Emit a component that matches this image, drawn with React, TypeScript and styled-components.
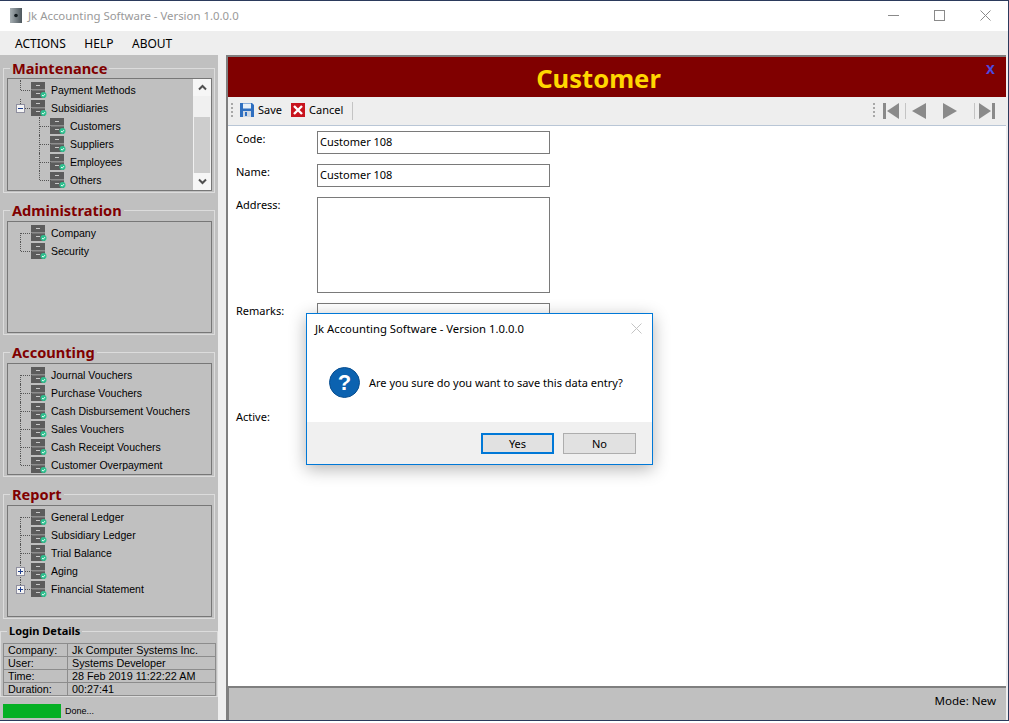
import React from 'react';
import styled, { createGlobalStyle } from 'styled-components';

const GlobalStyle = createGlobalStyle`
  html, body {
    margin: 0;
    padding: 0;
    background: #ffffff;
    overflow: hidden;
  }
  * {
    box-sizing: border-box;
  }
`;

const uiFont = `"Noto Sans", "Open Sans", sans-serif`;
const treeFont = `"Liberation Sans", sans-serif`;

const Window = styled.div`
  position: relative;
  width: 1009px;
  height: 721px;
  display: flex;
  flex-direction: column;
  border-top: 1px solid #2b3a5c;
  border-right: 1px solid #2b3a5c;
  border-bottom: 1px solid #2b3a5c;
  font-family: ${uiFont};
  color: #000;
`;

const TitleBar = styled.div`
  height: 30px;
  display: flex;
  align-items: center;
  background: #fff;
  padding: 0 0 2px 10px;
  flex: none;
`;

const AppTitle = styled.span`
  margin-left: 6px;
  font-size: 11.4px;
  color: #999999;
  flex: 1;
`;

const WindowButton = styled.div`
  width: 46px;
  height: 28px;
  display: flex;
  align-items: center;
  justify-content: center;
`;

const MenuBar = styled.div`
  height: 24px;
  flex: none;
  background: #eeeeee;
  display: flex;
  align-items: center;
  padding-left: 15px;
  gap: 18.5px;
`;

const MenuItem = styled.span`
  font-size: 12px;
`;

const Body = styled.div`
  flex: 1;
  min-height: 0;
  display: flex;
  background: #eeeeee;
`;

const Sidebar = styled.aside`
  width: 218px;
  flex: none;
  background: #c0c0c0;
  display: flex;
  flex-direction: column;
  padding-top: 3px;
`;

const GroupBox = styled.fieldset`
  height: 135px;
  margin: 0 3px 7px;
  padding: 0 2px 0 3px;
  border: 1px solid #dcdcdc;
  min-width: 0;
  display: block;
`;

const GroupTitle = styled.legend`
  font-family: "Noto Sans", sans-serif;
  font-size: 14.6px;
  line-height: 20px;
  font-weight: 700;
  color: #800000;
  padding: 0 2px;
  margin-left: 3px;
`;

const TreePanel = styled.div<{ $scroll?: boolean }>`
  position: relative;
  height: ${(p) => (p.$scroll ? 113 : 112)}px;
  margin-top: ${(p) => (p.$scroll ? 0 : 1)}px;
  border: 1px solid #777777;
  overflow: hidden;
  background: #c0c0c0;
`;

const TreeList = styled.div`
  display: flex;
  flex-direction: column;
  padding-top: 2px;
`;

const TreeRow = styled.div<{ $level: number }>`
  position: relative;
  height: 18px;
  display: flex;
  align-items: center;
  padding-left: ${(p) => 23 + p.$level * 19}px;
  font-family: ${treeFont};
  font-size: 10.5px;
  white-space: nowrap;
`;

const RowLabel = styled.span`
  margin-left: 4px;
`;

const Elbow = styled.span<{ $level: number; $up: number; $down: number }>`
  position: absolute;
  left: ${(p) => 12 + p.$level * 19}px;
  top: ${(p) => 9 - p.$up}px;
  height: ${(p) => p.$up + p.$down}px;
  width: 11px;
  border-left: 1px dotted #555;
  &::after {
    content: '';
    position: absolute;
    left: 0;
    top: ${(p) => p.$up}px;
    width: 11px;
    border-top: 1px dotted #555;
  }
`;

const ExpandBox = styled.span`
  position: absolute;
  left: 8px;
  top: 5px;
  width: 9px;
  height: 9px;
  background: #f4f4f4;
  border: 1px solid #8f8f9f;
  z-index: 1;
`;

const ExpandBar = styled.span<{ $vertical?: boolean }>`
  position: absolute;
  background: #1f3f8f;
  ${(p) => (p.$vertical ? 'left: 3px; top: 1px; width: 1px; height: 5px;' : 'left: 1px; top: 3px; width: 5px; height: 1px;')}
`;

const TreeScrollbar = styled.div`
  position: absolute;
  top: 0;
  right: 0;
  bottom: 0;
  width: 18px;
  background: #f0f0f0;
  display: flex;
  flex-direction: column;
  align-items: stretch;
`;

const ScrollButton = styled.div`
  height: 17px;
  flex: none;
  display: flex;
  align-items: center;
  justify-content: center;
  background: #f6f6f6;
`;

const ScrollTrack = styled.div`
  flex: 1;
  padding: 21px 1px 0;
`;

const ScrollThumb = styled.div`
  height: 56px;
  background: #cdcdcd;
`;

const LoginBox = styled.fieldset`
  height: 71px;
  margin: 0;
  padding: 7px 1px 0 2px;
  border: 1px solid #dcdcdc;
  min-width: 0;
`;

const LoginTitle = styled.legend`
  font-family: "Noto Sans", sans-serif;
  font-size: 11px;
  line-height: 10px;
  font-weight: 700;
  padding: 0 2px;
  margin-left: 4px;
`;

const LoginTable = styled.div`
  display: grid;
  grid-template-columns: 64px 1fr;
  border-top: 1px solid #8c8c8c;
  border-left: 1px solid #8c8c8c;
`;

const LoginCell = styled.div`
  height: 13px;
  border-right: 1px solid #8c8c8c;
  border-bottom: 1px solid #8c8c8c;
  font-family: ${treeFont};
  font-size: 10.8px;
  line-height: 12px;
  padding-left: 4px;
  white-space: nowrap;
`;

const StatusRow = styled.div`
  display: flex;
  align-items: center;
  padding: 7px 0 0 3px;
  gap: 4px;
`;

const ProgressBar = styled.div`
  width: 58px;
  height: 14px;
  background: #06b025;
`;

const StatusText = styled.span`
  font-family: ${treeFont};
  font-size: 9px;
`;

const MainPanel = styled.main`
  flex: 1;
  margin: 0 2px 0 8px;
  display: flex;
  flex-direction: column;
  border-top: 2px solid #7f7f7f;
  border-left: 2px solid #7f7f7f;
  min-width: 0;
  background: #fff;
`;

const FormHeader = styled.header`
  position: relative;
  height: 40px;
  flex: none;
  background: #800000;
  display: flex;
  align-items: center;
  justify-content: center;
  padding: 4px 37px 0 0;
`;

const FormTitle = styled.h1`
  margin: 0;
  font-family: "Noto Sans", sans-serif;
  font-size: 25.6px;
  line-height: 30px;
  font-weight: 700;
  color: #ffd700;
`;

const FormClose = styled.span`
  position: absolute;
  top: 3px;
  right: 11px;
  font-family: "Liberation Sans", sans-serif;
  font-size: 16px;
  font-weight: 700;
  color: #4a4ae0;
`;

const Toolbar = styled.div`
  height: 29px;
  flex: none;
  display: flex;
  align-items: center;
  background: #eeeeee;
  border-bottom: 1px solid #b9c6d6;
  padding: 0 11px 0 3px;
`;

const Grip = styled.span`
  width: 2px;
  height: 16px;
  margin-right: 7px;
  background-image: linear-gradient(#a8a8a8 50%, transparent 50%);
  background-size: 2px 4px;
`;

const ToolButton = styled.div`
  display: flex;
  align-items: center;
  gap: 4px;
  margin-right: 9px;
  font-size: 11px;
  line-height: 14px;
  padding-bottom: 3px;
`;

const ToolSeparator = styled.span<{ $height?: number }>`
  width: 1px;
  height: ${(p) => p.$height ?? 18}px;
  background: #c4c4c4;
`;

const Spacer = styled.div`
  flex: 1;
`;

const NavButton = styled.div<{ $gap: number }>`
  display: flex;
  margin-left: ${(p) => p.$gap}px;
`;

const FormBody = styled.div`
  flex: 1;
  padding: 5px 0 0 8px;
  display: flex;
  flex-direction: column;
  gap: 10px;
`;

const FormRow = styled.div`
  display: flex;
  align-items: flex-start;
  font-size: 11px;
`;

const FieldLabel = styled.label`
  width: 81px;
  flex: none;
  line-height: 16px;
  height: 17px;
`;

const TextField = styled.div<{ $tall?: boolean }>`
  width: 233px;
  height: ${(p) => (p.$tall ? 96 : 23)}px;
  border: 1px solid #7a7a7a;
  padding: 2px 2px;
  line-height: 16px;
  background: #fff;
`;

const FormFooter = styled.footer`
  height: 34px;
  flex: none;
  background: #c0c0c0;
  border-top: 2px solid #7f7f7f;
  border-left: 1px solid #7f7f7f;
  display: flex;
  align-items: center;
  justify-content: flex-end;
  padding: 0 10px 8px 0;
  font-size: 11.6px;
`;

const Dialog = styled.div`
  position: absolute;
  left: 306px;
  top: 312px;
  width: 347px;
  height: 152px;
  background: #fff;
  border: 1px solid #0078d7;
  box-shadow: 0 4px 16px rgba(0, 0, 0, 0.3);
  display: flex;
  flex-direction: column;
`;

const DialogHead = styled.div`
  height: 30px;
  display: flex;
  align-items: center;
  justify-content: space-between;
  padding: 0 10px 2px 8px;
  font-size: 11.3px;
  flex: none;
`;

const DialogMain = styled.div`
  flex: 1;
  display: flex;
  align-items: center;
  gap: 9px;
  padding: 0 0 1px 22px;
  font-size: 11px;
`;

const DialogFooter = styled.div`
  height: 42px;
  flex: none;
  background: #f0f0f0;
  display: flex;
  justify-content: flex-end;
  gap: 9px;
  padding: 11px 16px 0 0;
`;

const DialogButton = styled.div<{ $primary?: boolean }>`
  width: 73px;
  height: 21px;
  display: flex;
  align-items: center;
  justify-content: center;
  background: #e1e1e1;
  border: ${(p) => (p.$primary ? '2px solid #0078d7' : '1px solid #adadad')};
  font-size: 11px;
`;

const DrawerIcon = () => (
  <svg width="16" height="16" viewBox="0 0 16 16">
    <rect x="0" y="0" width="14" height="7.5" fill="#5c5c5c" />
    <rect x="0" y="8.25" width="14" height="7.75" fill="#5c5c5c" />
    <rect x="5" y="3" width="4" height="1" fill="#c8c8c8" />
    <rect x="5" y="11" width="4" height="1" fill="#c8c8c8" />
    <circle cx="12.5" cy="13" r="3" fill="#2fc08f" />
    <path d="M11 13l1.2 1.1 1.8-2" fill="none" stroke="#fff" strokeWidth="0.9" />
  </svg>
);

const Chevron = ({ up }: { up?: boolean }) => (
  <svg width="9" height="7" viewBox="0 0 9 7">
    <path d={up ? 'M1 5.5l3.5-3.5L8 5.5' : 'M1 1.5L4.5 5 8 1.5'} fill="none" stroke="#505050" strokeWidth="2" />
  </svg>
);

type Node = {
  label: string;
  level?: number;
  up?: number;
  down?: number;
  expand?: 'plus' | 'minus';
};

const Tree = ({ nodes, scroll }: { nodes: Node[]; scroll?: boolean }) => (
  <TreePanel $scroll={scroll}>
    <TreeList>
      {nodes.map((n) => (
        <TreeRow key={n.label} $level={n.level ?? 0}>
          <Elbow $level={n.level ?? 0} $up={n.up ?? 9} $down={n.down ?? 9} />
          {n.expand && (
            <ExpandBox>
              <ExpandBar />
              {n.expand === 'plus' && <ExpandBar $vertical />}
            </ExpandBox>
          )}
          <DrawerIcon />
          <RowLabel>{n.label}</RowLabel>
        </TreeRow>
      ))}
    </TreeList>
    {scroll && (
      <TreeScrollbar>
        <ScrollButton><Chevron up /></ScrollButton>
        <ScrollTrack><ScrollThumb /></ScrollTrack>
        <ScrollButton><Chevron /></ScrollButton>
      </TreeScrollbar>
    )}
  </TreePanel>
);

const NavIcon = ({ kind }: { kind: 'first' | 'prev' | 'next' | 'last' }) => {
  const paths = {
    first: 'M0 0h3v16H0zM16 0v16L4 8z',
    prev: 'M14 0v16L0 8z',
    next: 'M0 0v16l14-8z',
    last: 'M13 0h3v16h-3zM0 0v16l12-8z',
  };
  return (
    <svg width="16" height="16" viewBox="0 0 16 16">
      <path d={paths[kind]} fill="#8a8a8a" />
    </svg>
  );
};

const login = [
  ['Company:', 'Jk Computer Systems Inc.'],
  ['User:', 'Systems Developer'],
  ['Time:', '28 Feb 2019 11:22:22 AM'],
  ['Duration:', '00:27:41'],
];

const App: React.FC = () => {
  return (
    <>
      <GlobalStyle />
      <Window>
        <TitleBar>
          <svg width="12" height="15" viewBox="0 0 12 15">
            <defs>
              <linearGradient id="appIcon" x1="0" y1="0" x2="1" y2="0">
                <stop offset="0" stopColor="#a8b0b4" />
                <stop offset="1" stopColor="#4c565c" />
              </linearGradient>
            </defs>
            <rect width="12" height="15" fill="url(#appIcon)" />
            <circle cx="6" cy="7.5" r="1.8" fill="#10181c" />
          </svg>
          <AppTitle>Jk Accounting Software - Version 1.0.0.0</AppTitle>
          <WindowButton>
            <svg width="11" height="11" viewBox="0 0 11 11"><path d="M0 5.5h11" stroke="#8a8a8a" /></svg>
          </WindowButton>
          <WindowButton>
            <svg width="11" height="11" viewBox="0 0 11 11"><rect x="0.5" y="0.5" width="10" height="10" fill="none" stroke="#8a8a8a" /></svg>
          </WindowButton>
          <WindowButton>
            <svg width="11" height="11" viewBox="0 0 11 11"><path d="M0.5 0.5l10 10M10.5 0.5l-10 10" stroke="#8a8a8a" /></svg>
          </WindowButton>
        </TitleBar>
        <MenuBar>
          <MenuItem>ACTIONS</MenuItem>
          <MenuItem>HELP</MenuItem>
          <MenuItem>ABOUT</MenuItem>
        </MenuBar>
        <Body>
          <Sidebar>
            <GroupBox>
              <GroupTitle>Maintenance</GroupTitle>
              <Tree
                scroll
                nodes={[
                  { label: 'Payment Methods', up: 10, down: 0 },
                  { label: 'Subsidiaries', expand: 'minus', down: 0 },
                  { label: 'Customers', level: 1 },
                  { label: 'Suppliers', level: 1 },
                  { label: 'Employees', level: 1 },
                  { label: 'Others', level: 1, down: 0 },
                ]}
              />
            </GroupBox>
            <GroupBox>
              <GroupTitle>Administration</GroupTitle>
              <Tree
                nodes={[
                  { label: 'Company', up: 0 },
                  { label: 'Security', down: 0 },
                ]}
              />
            </GroupBox>
            <GroupBox>
              <GroupTitle>Accounting</GroupTitle>
              <Tree
                nodes={[
                  { label: 'Journal Vouchers', up: 0 },
                  { label: 'Purchase Vouchers' },
                  { label: 'Cash Disbursement Vouchers' },
                  { label: 'Sales Vouchers' },
                  { label: 'Cash Receipt Vouchers' },
                  { label: 'Customer Overpayment', down: 0 },
                ]}
              />
            </GroupBox>
            <GroupBox>
              <GroupTitle>Report</GroupTitle>
              <Tree
                nodes={[
                  { label: 'General Ledger', up: 0 },
                  { label: 'Subsidiary Ledger' },
                  { label: 'Trial Balance' },
                  { label: 'Aging', expand: 'plus' },
                  { label: 'Financial Statement', expand: 'plus', down: 0 },
                ]}
              />
            </GroupBox>
            <LoginBox>
              <LoginTitle>Login Details</LoginTitle>
              <LoginTable>
                {login.map(([k, v]) => (
                  <React.Fragment key={k}>
                    <LoginCell>{k}</LoginCell>
                    <LoginCell>{v}</LoginCell>
                  </React.Fragment>
                ))}
              </LoginTable>
            </LoginBox>
            <StatusRow>
              <ProgressBar />
              <StatusText>Done...</StatusText>
            </StatusRow>
          </Sidebar>
          <MainPanel>
            <FormHeader>
              <FormTitle>Customer</FormTitle>
              <FormClose>x</FormClose>
            </FormHeader>
            <Toolbar>
              <Grip />
              <ToolButton>
                <svg width="14" height="14" viewBox="0 0 14 14">
                  <path d="M0 0h12l2 2v12H0z" fill="#2f6fc0" />
                  <rect x="3" y="0.5" width="8" height="5" fill="#e8f0f8" />
                  <rect x="3" y="8" width="8" height="6" fill="#cfd8e4" />
                  <rect x="5" y="9" width="2" height="4" fill="#2f6fc0" />
                </svg>
                Save
              </ToolButton>
              <ToolButton>
                <svg width="14" height="14" viewBox="0 0 14 14">
                  <rect width="14" height="14" fill="#c8141e" />
                  <path d="M3 3l8 8M11 3l-8 8" stroke="#fff" strokeWidth="2.4" />
                </svg>
                Cancel
              </ToolButton>
              <ToolSeparator />
              <Spacer />
              <Grip />
              <NavButton $gap={1}><NavIcon kind="first" /></NavButton>
              <NavButton $gap={6}><ToolSeparator $height={16} /></NavButton>
              <NavButton $gap={6}><NavIcon kind="prev" /></NavButton>
              <NavButton $gap={15}><NavIcon kind="next" /></NavButton>
              <NavButton $gap={15}><ToolSeparator $height={16} /></NavButton>
              <NavButton $gap={4}><NavIcon kind="last" /></NavButton>
            </Toolbar>
            <FormBody>
              <FormRow>
                <FieldLabel>Code:</FieldLabel>
                <TextField>Customer 108</TextField>
              </FormRow>
              <FormRow>
                <FieldLabel>Name:</FieldLabel>
                <TextField>Customer 108</TextField>
              </FormRow>
              <FormRow>
                <FieldLabel>Address:</FieldLabel>
                <TextField $tall />
              </FormRow>
              <FormRow>
                <FieldLabel>Remarks:</FieldLabel>
                <TextField $tall />
              </FormRow>
              <FormRow>
                <FieldLabel>Active:</FieldLabel>
              </FormRow>
            </FormBody>
            <FormFooter>Mode: New</FormFooter>
          </MainPanel>
        </Body>
        <Dialog>
          <DialogHead>
            Jk Accounting Software - Version 1.0.0.0
            <svg width="11" height="11" viewBox="0 0 11 11"><path d="M0.5 0.5l10 10M10.5 0.5l-10 10" stroke="#c4c4c4" /></svg>
          </DialogHead>
          <DialogMain>
            <svg width="31" height="31" viewBox="0 0 31 31">
              <circle cx="15.5" cy="15.5" r="15" fill="#0b62b0" stroke="#0a4f90" />
              <text x="15.5" y="23" textAnchor="middle" fontFamily="Liberation Sans, sans-serif" fontSize="22" fontWeight="700" fill="#fff">?</text>
            </svg>
            Are you sure do you want to save this data entry?
          </DialogMain>
          <DialogFooter>
            <DialogButton $primary>Yes</DialogButton>
            <DialogButton>No</DialogButton>
          </DialogFooter>
        </Dialog>
      </Window>
    </>
  );
};

export default App;
